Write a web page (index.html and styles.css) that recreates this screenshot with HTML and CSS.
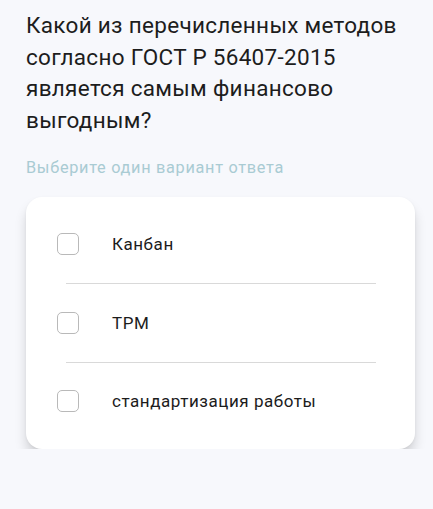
FILE: index.html
```html
<!DOCTYPE html>
<html lang="ru">
<head>
<meta charset="utf-8">
<link rel="stylesheet" href="styles.css">
</head>
<body>
<main class="page">
  <h1 class="question">Какой из перечисленных методов согласно ГОСТ Р 56407-2015 является самым финансово выгодным?</h1>
  <p class="hint">Выберите один вариант ответа</p>
  <div class="card">
    <label class="option"><span class="box"></span><span class="label">Канбан</span></label>
    <div class="sep"></div>
    <label class="option"><span class="box"></span><span class="label">TPM</span></label>
    <div class="sep"></div>
    <label class="option"><span class="box"></span><span class="label">стандартизация работы</span></label>
  </div>
</main>
</body>
</html>
```
FILE: styles.css
```css
html, body {
  margin: 0;
  padding: 0;
  background: #f7f8fc;
}
body {
  font-family: Roboto, "Noto Sans", sans-serif;
  color: #1c1c1c;
}
.page {
  padding: 10px 18px 0 26px;
}
.question {
  margin: 0;
  font-size: 22.5px;
  font-weight: 400;
  line-height: 31.5px;
  letter-spacing: 0.3px;
  color: #1d1d1d;
  width: 385px;
}
.hint {
  margin: 22px 0 0;
  font-size: 16.3px;
  line-height: 20px;
  letter-spacing: 0.7px;
  color: #a9cbd3;
}
.card {
  margin-top: 19px;
  width: 389px;
  background: #fff;
  border-radius: 16px;
  box-shadow: 0 9px 12px rgba(0,0,0,0.15), 0 1px 3px rgba(0,0,0,0.05);
  padding: 0 0 10px;
}
.option {
  display: flex;
  align-items: center;
  height: 76px;
  padding-left: 31px;
  gap: 33px;
}
.option:first-child { height: 86px; padding-top: 8px; box-sizing: border-box; }
.option:nth-child(3) { height: 78px; }
.box {
  width: 20px;
  height: 20px;
  border: 1px solid #b9b9b9;
  border-radius: 5px;
  flex: none;
}
.label {
  font-size: 17px;
  color: #1c1c1c;
  letter-spacing: 0.55px;
}
.sep {
  height: 1px;
  background: #d9d9d9;
  margin: 0 39px 0 40px;
}
```
